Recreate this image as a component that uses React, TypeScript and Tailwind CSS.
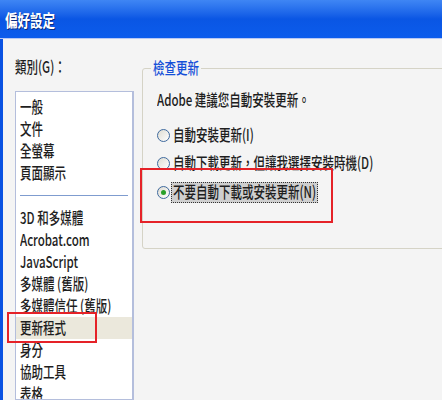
import React from "react";

const FONT = '"Noto Sans CJK TC", "Noto Sans", "Liberation Sans", sans-serif';

function T({ children, className = "" }: { children: React.ReactNode; className?: string }) {
  return <span className={`inline-block scale-y-[1.4] whitespace-nowrap ${className}`}>{children}</span>;
}

function Radio({ checked = false }: { checked?: boolean }) {
  return (
    <span className="relative inline-flex h-[13px] w-[13px] shrink-0 items-center justify-center rounded-full border border-[#3f6a9e] bg-gradient-to-br from-[#dedcd2] to-white">
      {checked && <span className="h-[5px] w-[5px] rounded-full bg-[#2aa02a]" />}
    </span>
  );
}

const items1 = ["一般", "文件", "全螢幕", "頁面顯示"];
const items2 = ["3D 和多媒體", "Acrobat.com", "JavaScript", "多媒體 (舊版)", "多媒體信任 (舊版)", "更新程式", "身分", "協助工具", "表格"];

export default function App() {
  return (
    <div className="relative h-[410px] w-[442px] overflow-hidden bg-white text-[11.5px] font-medium text-[#1e1e1e]" style={{ fontFamily: FONT }}>
      {/* Title bar */}
      <div className="flex h-[38px] items-center bg-gradient-to-b from-[#3f86f4] via-[#0a56e4] to-[#0c5cec] pl-[5px] pt-[3px]">
        <T className="text-[12.5px] font-bold text-white [text-shadow:1px_1px_0_#0a2c80]">偏好設定</T>
      </div>
      <div className="h-[1px] bg-[#b8c8f4]" />

      {/* Body */}
      <div className="flex h-[361px] overflow-hidden border-l-[3px] border-[#0a52e2] bg-[#f4f4f4] pl-[12px]">
        {/* Left column */}
        <div className="flex w-[119px] shrink-0 flex-col">
          <div className="mt-[19px] flex h-[18px] items-center">
            <T>類別(G)：</T>
          </div>
          <div className="mt-[15px] flex-1 overflow-hidden border border-r-2 border-[#b4bedc] bg-white pt-[4px]">
            {items1.map((s) => (
              <div key={s} className="flex h-[22px] items-center pl-[4px]">
                <T>{s}</T>
              </div>
            ))}
            <div className="flex h-[23px] items-center px-[4px]">
              <div className="h-[1px] w-full bg-[#7f9ccf]" />
            </div>
            {items2.map((s) => (
              <div
                key={s}
                className={`flex h-[22px] items-center pl-[4px] ${s === "更新程式" ? "bg-[#ebe8dc]" : ""}`}
              >
                <T>{s}</T>
              </div>
            ))}
          </div>
        </div>

        {/* Right column */}
        <div className="ml-[8px] min-w-0 flex-1">
          <div className="relative mt-[29px] h-[181px] w-[320px] shrink-0 rounded-[3px] border border-[#d5d3c6]">
            <div className="absolute -top-[10px] left-[8px] bg-[#f4f4f4] px-[2px] text-[#1450d8]">
              <T>檢查更新</T>
            </div>
            <div className="flex flex-col pl-[14px] pt-[22px]">
              <div className="flex h-[18px] items-center">
                <T>Adobe 建議您自動安裝更新。</T>
              </div>
              <div className="mt-[16px] flex h-[20px] items-center gap-[3px]">
                <Radio />
                <T>自動安裝更新(I)</T>
              </div>
              <div className="mt-[8px] flex h-[20px] items-center gap-[3px]">
                <Radio />
                <T>自動下載更新，但讓我選擇安裝時機(D)</T>
              </div>
              <div className="mt-[9px] flex h-[20px] items-center gap-[1px]">
                <Radio checked />
                <span className="flex h-[21px] items-center border border-dotted border-[#333] bg-[#cfcfcf] px-[1px]">
                  <T>不要自動下載或安裝更新(N)</T>
                </span>
              </div>
            </div>
          </div>
        </div>
      </div>

      {/* Red annotation boxes */}
      <div className="absolute left-[7px] top-[312px] h-[31px] w-[90px] border-2 border-[#e52228]" />
      <div className="absolute left-[140px] top-[168px] h-[55px] w-[193px] border-2 border-[#e52228]" />
    </div>
  );
}
